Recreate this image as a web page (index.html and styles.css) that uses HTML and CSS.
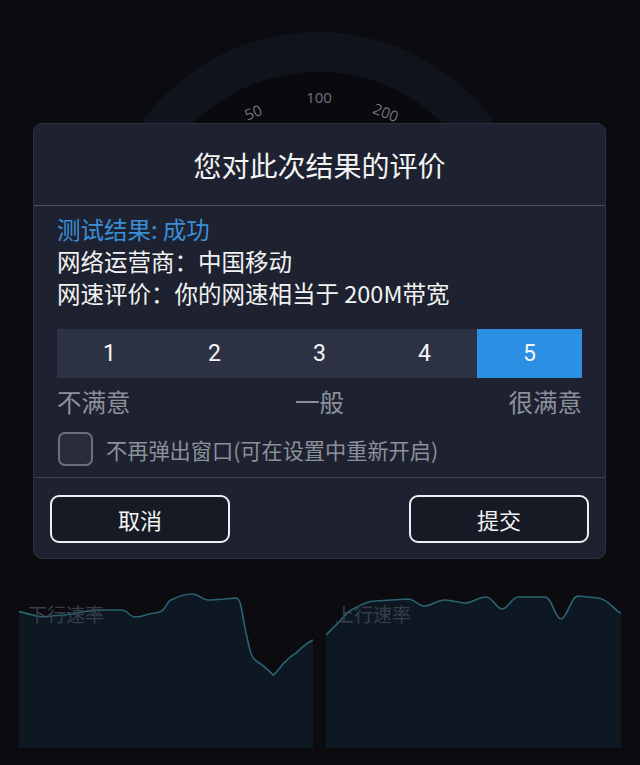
FILE: index.html
```html
<!DOCTYPE html>
<html lang="zh-CN">
<head>
<meta charset="utf-8">
<title>评价</title>
<link rel="stylesheet" href="styles.css">
</head>
<body>
<div class="screen">
  <div class="gauge">
    <svg class="gauge-svg" width="640" height="588" viewBox="0 0 640 588">
      <circle cx="318" cy="250" r="218" fill="#0f131b"/>
      <circle cx="318" cy="250" r="178" fill="#0a0a0e"/>
      <text x="253" y="118" class="tick" transform="rotate(-22 253 112)">50</text>
      <text x="319" y="103" class="tick">100</text>
      <text x="386" y="118" class="tick" transform="rotate(22 386 112)">200</text>
    </svg>
  </div>

  <div class="charts">
    <div class="chart">
      <svg width="294" height="160" viewBox="0 0 294 160">
        <path class="area" d="M0,23.6 C8,25 15,28 22,28.7 C30,29 38,27 45,27 L75,22 L103,22 C108,22 111,29 116,29 C124,29 130,25 136,25 C140,25 142,23 144,22 C147,19 149,13 152,12 C160,8 166,6 173,6 C180,6 183,12 189,12 C196,12 200,11 205,11 L217,10 C220,10 221,14 222,18 C224,28 226,42 228,49 C230,58 231,68 236,72 C242,76 248,80 254,87 C259,84 263,76 267,73 C271,69 273,67 276,66 C281,62 285,56 294,52 L294,160 L0,160 Z"/>
        <path class="line" d="M0,23.6 C8,25 15,28 22,28.7 C30,29 38,27 45,27 L75,22 L103,22 C108,22 111,29 116,29 C124,29 130,25 136,25 C140,25 142,23 144,22 C147,19 149,13 152,12 C160,8 166,6 173,6 C180,6 183,12 189,12 C196,12 200,11 205,11 L217,10 C220,10 221,14 222,18 C224,28 226,42 228,49 C230,58 231,68 236,72 C242,76 248,80 254,87 C259,84 263,76 267,73 C271,69 273,67 276,66 C281,62 285,56 294,52"/>
      </svg>
      <span class="chart-label">下行速率</span>
    </div>
    <div class="chart">
      <svg width="295" height="160" viewBox="0 0 295 160">
        <path class="area" d="M0,47 C5,42 9,38 13,34 C19,27 23,22 29,20 C36,16 42,13 49,13 L82,11 C89,11 92,18 98,18 C105,18 111,12 119,12 C127,12 132,15 139,15 C146,15 152,9 160,9 C167,9 170,21 176,21 C182,21 186,9 192,9 L219,9 C226,9 229,31 235,31 C241,31 245,8 252,8 L272,10 C283,11 287,22 295,25 L295,160 L0,160 Z"/>
        <path class="line" d="M0,47 C5,42 9,38 13,34 C19,27 23,22 29,20 C36,16 42,13 49,13 L82,11 C89,11 92,18 98,18 C105,18 111,12 119,12 C127,12 132,15 139,15 C146,15 152,9 160,9 C167,9 170,21 176,21 C182,21 186,9 192,9 L219,9 C226,9 229,31 235,31 C241,31 245,8 252,8 L272,10 C283,11 287,22 295,25"/>
      </svg>
      <span class="chart-label">上行速率</span>
    </div>
  </div>

  <div class="dialog">
    <div class="dialog-title">您对此次结果的评价</div>
    <div class="dialog-body">
      <div class="line-item result">测试结果: 成功</div>
      <div class="line-item">网络运营商：中国移动</div>
      <div class="line-item">网速评价：你的网速相当于 200M带宽</div>
      <div class="rating">
        <div class="rate">1</div>
        <div class="rate">2</div>
        <div class="rate">3</div>
        <div class="rate">4</div>
        <div class="rate active">5</div>
      </div>
      <div class="scale">
        <span>不满意</span>
        <span>一般</span>
        <span>很满意</span>
      </div>
      <div class="check-row">
        <span class="checkbox"></span>
        <span class="check-text">不再弹出窗口(可在设置中重新开启)</span>
      </div>
    </div>
    <div class="dialog-actions">
      <div class="btn">取消</div>
      <div class="btn">提交</div>
    </div>
  </div>
</div>
</body>
</html>
```

FILE: styles.css
```css
html, body {
  margin: 0;
  padding: 0;
  background: #0b0b10;
}

body {
  font-family: "Noto Sans CJK SC", "Noto Sans", sans-serif;
  color: #f2f2f2;
}

.screen {
  position: relative;
  width: 640px;
  height: 765px;
  overflow: hidden;
  background: #0b0b10;
}

.gauge {
  height: 588px;
}

.gauge-svg {
  display: block;
}

.tick {
  font-family: "Open Sans", "Noto Sans", sans-serif;
  font-size: 15px;
  fill: #6e7482;
  text-anchor: middle;
}

.charts {
  display: grid;
  grid-template-columns: 294px 295px;
  column-gap: 13px;
  padding: 0 19px;
}

.chart {
  position: relative;
  height: 160px;
}

.chart svg {
  display: block;
}

.area {
  fill: #0d1822;
}

.line {
  fill: none;
  stroke: #2a6472;
  stroke-width: 1.6;
  stroke-linejoin: round;
}

.chart-label {
  position: absolute;
  left: 9px;
  top: 12px;
  font-size: 19px;
  color: #383e48;
}

.dialog {
  position: absolute;
  top: 123px;
  left: 33px;
  width: 573px;
  height: 436px;
  box-sizing: border-box;
  background: #1e2230;
  border: 1px solid #2c313e;
  border-radius: 9px;
  display: flex;
  flex-direction: column;
}

.dialog-title {
  height: 81px;
  display: flex;
  align-items: center;
  justify-content: center;
  font-size: 28px;
  color: #f4f4f4;
  border-bottom: 1px solid #4a4f5c;
}

.dialog-body {
  padding: 7px 23px 11px 23px;
  border-bottom: 1px solid #3d4250;
}

.line-item {
  font-size: 23.5px;
  line-height: 32px;
  color: #f2f2f2;
}

.line-item.result {
  color: #3a8ed8;
}

.rating {
  margin-top: 20px;
  display: grid;
  grid-template-columns: repeat(5, 1fr);
  height: 49px;
  background: #2d3144;
}

.rate {
  display: flex;
  align-items: center;
  justify-content: center;
  font-family: "Roboto", "Noto Sans", sans-serif;
  font-size: 23px;
  color: #f4f4f4;
}

.rate.active {
  background: #2b8fe3;
}

.scale {
  margin-top: 9px;
  display: flex;
  justify-content: space-between;
  font-size: 24.5px;
  line-height: 30px;
  color: #8b909a;
}

.check-row {
  margin-top: 15px;
  display: flex;
  align-items: center;
  gap: 13px;
}

.checkbox {
  width: 31px;
  height: 30px;
  border: 2px solid #6a6f7c;
  border-radius: 7px;
  background: #272b3a;
  box-sizing: content-box;
  margin-left: 1px;
}

.check-text {
  font-size: 21.2px;
  color: #8b909a;
}

.dialog-actions {
  display: flex;
  justify-content: space-between;
  padding: 17px 16px 0 16px;
}

.btn {
  width: 180px;
  height: 48px;
  box-sizing: border-box;
  border: 2px solid #eceef2;
  border-radius: 9px;
  background: #161a24;
  display: flex;
  align-items: center;
  justify-content: center;
  font-size: 22px;
  color: #f4f4f4;
}
```
